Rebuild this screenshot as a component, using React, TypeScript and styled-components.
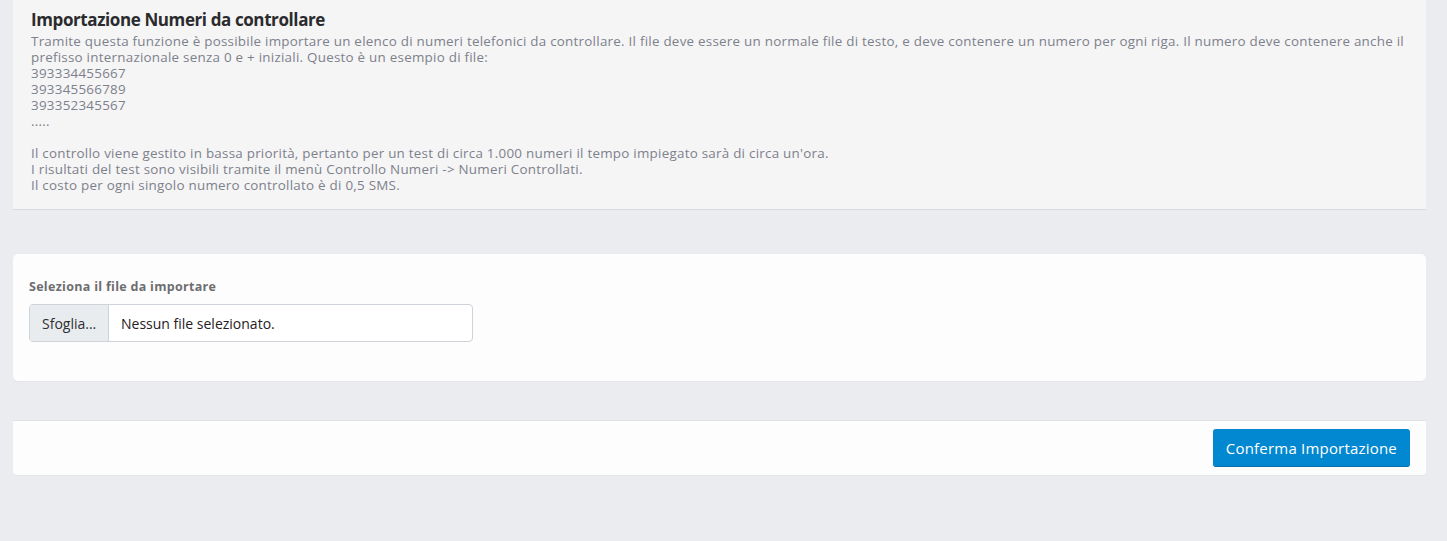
import React from "react";
import styled, { createGlobalStyle } from "styled-components";

const GlobalStyle = createGlobalStyle`
  html, body {
    margin: 0;
    padding: 0;
    background: #ebecf0;
  }
  body {
    font-family: "Open Sans", "Liberation Sans", sans-serif;
  }
`;

const Page = styled.div`
  padding: 0 21px 0 13px;
  min-height: 541px;
  box-sizing: border-box;
`;

const InfoPanel = styled.section`
  background: #f5f5f6;
  border-bottom: 1px solid #d9dadd;
  padding: 9px 18px 16px 18px;
`;

const Title = styled.h3`
  margin: 0 0 2px 0;
  font-size: 17px;
  font-weight: 700;
  letter-spacing: -0.4px;
  color: #2b2b2e;
  line-height: 22px;
`;

const InfoText = styled.p`
  margin: 0;
  font-size: 13.4px;
  letter-spacing: 0.25px;
  line-height: 16px;
  color: #7d818b;
`;

const Card = styled.section<{ $top?: boolean }>`
  background: #fdfdfd;
  margin-top: ${(p) => (p.$top ? "44px" : "39px")};
  border-radius: ${(p) => (p.$top ? "5px" : "0 0 4px 4px")};
  border-top: ${(p) => (p.$top ? "none" : "1px solid #dfe0e3")};
  box-shadow: 0 1px 1px rgba(0, 0, 0, 0.03);
`;

const FormBody = styled.div`
  padding: 24px 16px 39px 16px;
`;

const Label = styled.label`
  display: block;
  font-size: 12.5px;
  letter-spacing: 0.3px;
  font-weight: 700;
  color: #6d6d70;
  margin-bottom: 9px;
`;

const FileGroup = styled.div`
  display: flex;
  width: 444px;
  height: 38px;
  border: 1px solid #ced2d9;
  border-radius: 4px;
  box-sizing: border-box;
  overflow: hidden;
  background: #fff;
`;

const BrowseButton = styled.span`
  display: flex;
  align-items: center;
  padding: 0 12px;
  width: 79px;
  box-sizing: border-box;
  background: #e9ecef;
  border-right: 1px solid #ced2d9;
  font-size: 14px;
  color: #2d2f33;
`;

const FileName = styled.span`
  display: flex;
  align-items: center;
  padding: 0 12px;
  font-size: 14px;
  color: #1f2024;
`;

const Footer = styled.div`
  display: flex;
  justify-content: flex-end;
  padding: 8px 16px;
`;

const PrimaryButton = styled.button`
  font-family: inherit;
  font-size: 15px;
  letter-spacing: 0.2px;
  color: #fff;
  background: #0288d1;
  border: none;
  border-bottom: 1px solid #0570a8;
  border-radius: 3px;
  height: 38px;
  padding: 0 13px;
  cursor: pointer;
`;

export default function App() {
  return (
    <>
      <GlobalStyle />
      <Page>
        <InfoPanel>
          <Title>Importazione Numeri da controllare</Title>
          <InfoText>
            Tramite questa funzione è possibile importare un elenco di numeri
            telefonici da controllare. Il file deve essere un normale file di
            testo, e deve contenere un numero per ogni riga. Il numero deve
            contenere anche il prefisso internazionale senza 0 e + iniziali.
            Questo è un esempio di file:
            <br />
            393334455667
            <br />
            393345566789
            <br />
            393352345567
            <br />
            .....
            <br />
            <br />
            Il controllo viene gestito in bassa priorità, pertanto per un test
            di circa 1.000 numeri il tempo impiegato sarà di circa un'ora.
            <br />
            I risultati del test sono visibili tramite il menù Controllo Numeri
            -&gt; Numeri Controllati.
            <br />
            Il costo per ogni singolo numero controllato è di 0,5 SMS.
          </InfoText>
        </InfoPanel>

        <Card $top>
          <FormBody>
            <Label>Seleziona il file da importare</Label>
            <FileGroup>
              <BrowseButton>Sfoglia...</BrowseButton>
              <FileName>Nessun file selezionato.</FileName>
            </FileGroup>
          </FormBody>
        </Card>

        <Card>
          <Footer>
            <PrimaryButton>Conferma Importazione</PrimaryButton>
          </Footer>
        </Card>
      </Page>
    </>
  );
}
